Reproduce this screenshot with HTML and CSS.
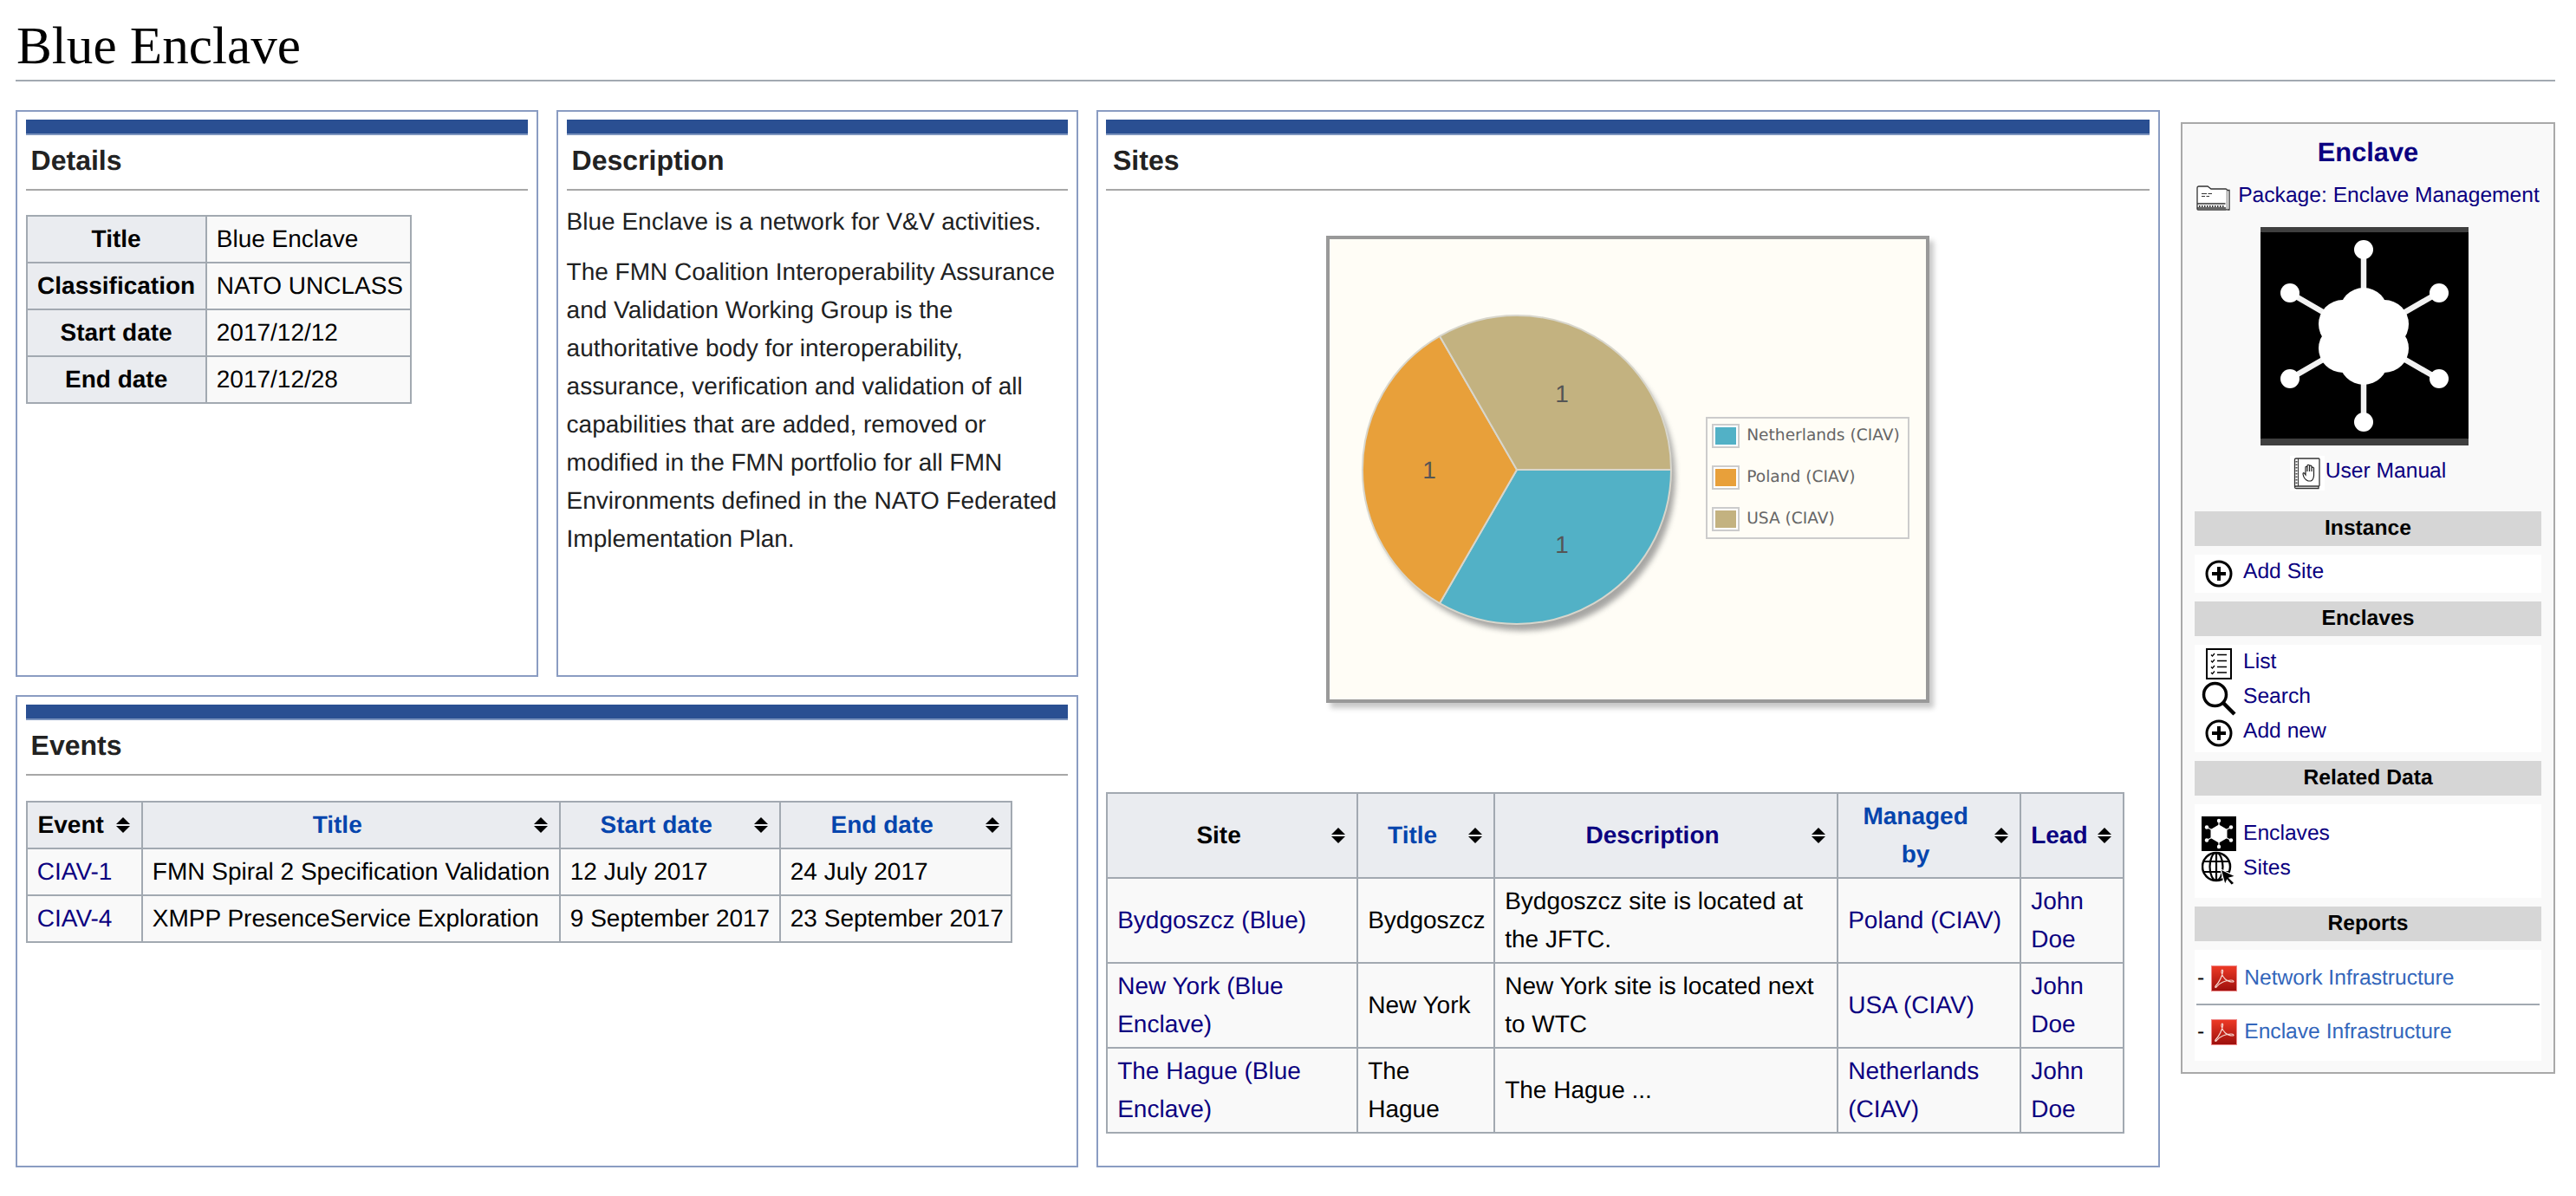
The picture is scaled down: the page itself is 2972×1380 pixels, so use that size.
FILE: index.html
```html
<!DOCTYPE html>
<html lang="en">
<head>
  <meta charset="UTF-8">
  <title>Blue Enclave</title>
  <link rel="stylesheet" href="styles.css">
</head>
<body>

  <svg class="svg-defs" aria-hidden="true">
    <defs>
      <linearGradient id="pdfRed" x1="0" y1="0" x2="0" y2="1">
        <stop offset="0" stop-color="#ee3a26"/>
        <stop offset="1" stop-color="#9c0f0c"/>
      </linearGradient>
    </defs>
    <symbol id="sort" viewBox="0 0 16 18">
      <path d="M8 0 16 8H0Z"/>
      <path d="M0 10H16L8 18Z"/>
    </symbol>
    <symbol id="plus" viewBox="0 0 40 40">
      <circle cx="20" cy="20" r="14" fill="#fff" stroke="#000" stroke-width="3"/>
      <path d="M12 20H28M20 12V28" stroke="#000" stroke-width="4"/>
    </symbol>
    <symbol id="pdf" viewBox="0 0 30 30">
      <rect x="0.5" y="0.5" width="29" height="29" fill="url(#pdfRed)" stroke="#e88"/>
      <path d="M5 24C9 20 13 12 13.6 7 13.9 4 11.6 4.600 12 8 13 14 18 19 25 19 27 19 26 17 23 17 17 17 10 20 6.500 24.500 5 26 4.300 25 5 24Z" fill="none" stroke="#f6d8d0" stroke-width="1.200"/>
    </symbol>
  </svg>

  <h1 class="page-title">Blue Enclave</h1>

  <div class="layout">
    <div class="main">
      <div class="left-col">
        <section class="panel panel-top">
          <div class="panel-bar"></div>
          <h2>Details</h2>
          <table class="wikitable details-table">
            <colgroup><col class="dt-1"><col></colgroup>
            <tr><th>Title</th><td>Blue Enclave</td></tr>
            <tr><th>Classification</th><td>NATO UNCLASS</td></tr>
            <tr><th>Start date</th><td>2017/12/12</td></tr>
            <tr><th>End date</th><td>2017/12/28</td></tr>
          </table>
        </section>

        <section class="panel panel-top">
          <div class="panel-bar"></div>
          <h2>Description</h2>
          <p class="desc-first">Blue Enclave is a network for V&amp;V activities.</p>
          <p>The FMN Coalition Interoperability Assurance and Validation Working Group is the authoritative body for interoperability, assurance, verification and validation of all capabilities that are added, removed or modified in the FMN portfolio for all FMN Environments defined in the NATO Federated Implementation Plan.</p>
        </section>

        <section class="panel panel-events">
          <div class="panel-bar"></div>
          <h2>Events</h2>
          <table class="wikitable events-table">
            <colgroup><col class="ev-1"><col class="ev-2"><col class="ev-3"><col></colgroup>
            <tr>
              <th class="sortable">Event<svg class="sort-icon"><use href="#sort"/></svg></th>
              <th class="sortable"><a class="link-new" href="#">Title</a><svg class="sort-icon"><use href="#sort"/></svg></th>
              <th class="sortable"><a class="link-new" href="#">Start date</a><svg class="sort-icon"><use href="#sort"/></svg></th>
              <th class="sortable"><a class="link-new" href="#">End date</a><svg class="sort-icon"><use href="#sort"/></svg></th>
            </tr>
            <tr><td><a href="#">CIAV-1</a></td><td>FMN Spiral 2 Specification Validation</td><td>12 July 2017</td><td>24 July 2017</td></tr>
            <tr><td><a href="#">CIAV-4</a></td><td>XMPP PresenceService Exploration</td><td>9 September 2017</td><td>23 September 2017</td></tr>
          </table>
        </section>
      </div>

      <section class="panel panel-sites">
        <div class="panel-bar"></div>
        <h2>Sites</h2>

        <div class="chart">
          <svg class="pie" viewBox="0 0 430 530">
            <defs>
              <filter id="pieBlur" x="-20%" y="-20%" width="140%" height="140%">
                <feGaussianBlur stdDeviation="3"/>
              </filter>
            </defs>
            <circle cx="223" cy="274" r="177" fill="#777" opacity="0.65" filter="url(#pieBlur)"/>
            <path d="M217 265H395A178 178 0 0 1 128 419.200Z" fill="#52b1c6" stroke="#d8d6cc" stroke-width="2"/>
            <path d="M217 265 128 419.200A178 178 0 0 1 128 110.800Z" fill="#e8a03a" stroke="#d8d6cc" stroke-width="2"/>
            <path d="M217 265 128 110.800A178 178 0 0 1 395 265Z" fill="#c3b280" stroke="#d8d6cc" stroke-width="2"/>
            <text class="pie-label" x="269" y="187">1</text>
            <text class="pie-label" x="116" y="275">1</text>
            <text class="pie-label" x="269" y="361">1</text>
          </svg>
          <div class="legend">
            <div class="legend-row"><span class="swatch"><i class="sw-teal"></i></span>Netherlands (CIAV)</div>
            <div class="legend-row"><span class="swatch"><i class="sw-orange"></i></span>Poland (CIAV)</div>
            <div class="legend-row"><span class="swatch"><i class="sw-tan"></i></span>USA (CIAV)</div>
          </div>
        </div>

        <table class="wikitable sites-table">
          <colgroup><col class="st-1"><col class="st-2"><col class="st-3"><col class="st-4"><col></colgroup>
          <tr>
            <th class="sortable">Site<svg class="sort-icon"><use href="#sort"/></svg></th>
            <th class="sortable"><a class="link-new" href="#">Title</a><svg class="sort-icon"><use href="#sort"/></svg></th>
            <th class="sortable"><a href="#">Description</a><svg class="sort-icon"><use href="#sort"/></svg></th>
            <th class="sortable"><a class="link-new" href="#">Managed by</a><svg class="sort-icon"><use href="#sort"/></svg></th>
            <th class="sortable"><a href="#">Lead</a><svg class="sort-icon"><use href="#sort"/></svg></th>
          </tr>
          <tr>
            <td><a href="#">Bydgoszcz (Blue)</a></td>
            <td>Bydgoszcz</td>
            <td>Bydgoszcz site is located at the JFTC.</td>
            <td><a href="#">Poland (CIAV)</a></td>
            <td><a href="#">John Doe</a></td>
          </tr>
          <tr>
            <td><a href="#">New York (Blue Enclave)</a></td>
            <td>New York</td>
            <td>New York site is located next to WTC</td>
            <td><a href="#">USA (CIAV)</a></td>
            <td><a href="#">John Doe</a></td>
          </tr>
          <tr>
            <td><a href="#">The Hague (Blue Enclave)</a></td>
            <td>The Hague</td>
            <td>The Hague ...</td>
            <td><a href="#">Netherlands (CIAV)</a></td>
            <td><a href="#">John Doe</a></td>
          </tr>
        </table>
      </section>
    </div>

    <aside class="sidebar">
      <div class="side-title"><a href="#">Enclave</a></div>

      <div class="side-link side-package">
        <svg class="folder-icon" viewBox="0 0 39 29">
          <path d="M1 27V3Q1 1 3 1H13L17 4H34Q35.500 4 35.500 6V27Q35.500 28 34 28H2Q1 28 1 27Z" fill="#fff" stroke="#333" stroke-width="1.300"/>
          <path d="M35.500 5.500H38V28H35.500" fill="#fff" stroke="#333" stroke-width="1.300"/>
          <path d="M6 9.500H12M13.500 9.500H18M6 12.500H10M11.500 12.500H15" stroke="#333" stroke-width="1.200"/>
          <path d="M1 21H33.500M1 26H34" stroke="#333" stroke-width="1.300"/>
          <path d="M3 24H32" stroke="#333" stroke-width="2" stroke-dasharray="1.500 1.500"/>
        </svg>
        <a href="#">Package: Enclave Management</a>
      </div>

      <svg class="enclave-image" viewBox="0 0 240 252">
        <rect width="240" height="252" fill="#000"/>
        <rect width="240" height="6" fill="#3f3f3f"/>
        <rect y="244" width="240" height="8" fill="#3f3f3f"/>
        <g fill="#fff">
          <path d="M119 26V225M34 76 205 175M205 76 34 175" stroke="#f2f2f2" stroke-width="6.500"/>
          <circle cx="119" cy="26" r="11"/>
          <circle cx="119" cy="225" r="11"/>
          <circle cx="34" cy="76" r="11"/>
          <circle cx="206" cy="76" r="11"/>
          <circle cx="34" cy="175" r="11"/>
          <circle cx="206" cy="175" r="11"/>
          <circle cx="119" cy="126" r="42"/>
          <circle cx="119" cy="98" r="28"/>
          <circle cx="119" cy="154" r="28"/>
          <circle cx="95" cy="112" r="28"/>
          <circle cx="143" cy="112" r="28"/>
          <circle cx="95" cy="140" r="28"/>
          <circle cx="143" cy="140" r="28"/>
        </g>
      </svg>

      <div class="side-link side-manual">
        <svg class="book-icon" viewBox="0 0 40 40">
          <rect width="40" height="40" fill="#fff"/>
          <path d="M5.500 36V4Q5.500 3 7 3H33Q34 3 34 4V34Q34 35 33 35H7Q5.500 35 5.500 36 5.500 37.500 7 37.500H33V35" fill="#fff" stroke="#333" stroke-width="1.300"/>
          <path d="M9.500 3V35" stroke="#333" stroke-width="1"/>
          <path d="M7.500 6V32" stroke="#444" stroke-width="2" stroke-dasharray="1.500 2"/>
          <path d="M21 29Q16 27 15 21Q15 19 16.500 20L18 22V13Q18.500 11.500 20 13V18V11Q21 9.500 22.500 11V18V11.500Q24 10.500 25 12V18V13.500Q26.500 12.500 27.500 14V23Q27 28 24 29Z" fill="#fff" stroke="#222" stroke-width="1.200"/>
        </svg>
        <a href="#">User Manual</a>
      </div>

      <div class="side-head side-head-first">Instance</div>
      <div class="side-body">
        <div class="side-row">
          <svg class="row-icon"><use href="#plus"/></svg>
          <a href="#">Add Site</a>
        </div>
      </div>

      <div class="side-head">Enclaves</div>
      <div class="side-body">
        <div class="side-row">
          <svg class="row-icon" viewBox="0 0 40 40">
            <rect x="6" y="3" width="28" height="34" fill="#fff" stroke="#000" stroke-width="2"/>
            <path d="M11 9.500 12.500 11 15 8M11 16.500 12.500 18 15 15M11 23.500 12.500 25 15 22M11 30 12.500 31.500 15 28.500" fill="none" stroke="#000" stroke-width="1.300"/>
            <path d="M18 9.500H29M18 16.500H29M18 23.500H29M18 30H29" stroke="#000" stroke-width="1.300"/>
          </svg>
          <a href="#">List</a>
        </div>
        <div class="side-row">
          <svg class="row-icon" viewBox="0 0 40 40">
            <circle cx="15.500" cy="15.500" r="13" fill="#fff" stroke="#000" stroke-width="3.500"/>
            <path d="M25 25 38 38" stroke="#000" stroke-width="4.500"/>
          </svg>
          <a href="#">Search</a>
        </div>
        <div class="side-row">
          <svg class="row-icon"><use href="#plus"/></svg>
          <a href="#">Add new</a>
        </div>
      </div>

      <div class="side-head">Related Data</div>
      <div class="side-body side-related">
        <div class="side-row">
          <svg class="row-icon" viewBox="0 0 40 40">
            <rect width="40" height="40" fill="#000"/>
            <g fill="#fff">
              <path d="M20 5V35M6 12.500 34 27.500M34 12.500 6 27.500" stroke="#eee" stroke-width="1.300"/>
              <circle cx="20" cy="5" r="2.200"/>
              <circle cx="20" cy="35" r="2.200"/>
              <circle cx="6" cy="12.500" r="2.200"/>
              <circle cx="34" cy="12.500" r="2.200"/>
              <circle cx="6" cy="27.500" r="2.200"/>
              <circle cx="34" cy="27.500" r="2.200"/>
              <path d="M20 10.500 28.500 15.500V24.500L20 29.500 11.500 24.500V15.500Z" stroke="#fff" stroke-width="2" stroke-linejoin="round"/>
            </g>
          </svg>
          <a href="#">Enclaves</a>
        </div>
        <div class="side-row">
          <svg class="row-icon" viewBox="0 0 40 40">
            <circle cx="17" cy="18" r="16" fill="#fff" stroke="#000" stroke-width="2.500"/>
            <ellipse cx="17" cy="18" rx="7.500" ry="16" fill="none" stroke="#000" stroke-width="2.200"/>
            <path d="M17 2V34M2 12H32M2 24H32" stroke="#000" stroke-width="2.200"/>
            <path d="M22 21 39 29 32 31 38 37 34.500 39.500 29.500 33.500 27 39Z" fill="#000" stroke="#fff" stroke-width="1.300"/>
          </svg>
          <a href="#">Sites</a>
        </div>
      </div>

      <div class="side-head">Reports</div>
      <div class="side-body side-reports">
        <div class="report-row">
          <span>-</span>
          <svg class="pdf-icon"><use href="#pdf"/></svg>
          <a href="#">Network Infrastructure</a>
        </div>
        <hr class="report-sep">
        <div class="report-row">
          <span>-</span>
          <svg class="pdf-icon"><use href="#pdf"/></svg>
          <a href="#">Enclave Infrastructure</a>
        </div>
      </div>
    </aside>
  </div>

</body>
</html>
```

FILE: styles.css
```css
* {
  box-sizing: border-box;
}

body {
  margin: 0;
  padding: 0 24px 0 18px;
  font-family: "Liberation Sans", Arial, sans-serif;
  font-size: 28px;
  line-height: 44px;
  color: #202122;
  background-color: #fff;
  text-rendering: geometricPrecision;
}

a {
  color: #0b0080;
  text-decoration: none;
}

.svg-defs {
  position: absolute;
  width: 0;
  height: 0;
}

.page-title {
  margin: 0 0 33px;
  padding: 15px 0 0 1px;
  font-family: "Liberation Serif", "Times New Roman", serif;
  font-size: 61.2px;
  font-weight: normal;
  line-height: 77px;
  color: #000;
  border-bottom: 2px solid #a2a9b1;
}

.layout {
  display: flex;
  gap: 24px;
  align-items: flex-start;
}

.main {
  display: grid;
  grid-template-columns: 1226px 1227px;
  gap: 21px;
}

.left-col {
  display: grid;
  grid-template-columns: 603px 602px;
  grid-template-rows: 654px 545px;
  gap: 21px;
}

.panel {
  padding: 9px 9.6px;
  border: 2px solid #8a9cc2;
}

.panel-events {
  grid-column: 1 / 3;
}

.panel-sites {
  padding-left: 9px;
}

.panel-bar {
  height: 18px;
  background-color: #2a4f92;
  border-bottom: 2px solid #7c94bd;
}

.panel h2 {
  margin: 0;
  height: 64px;
  padding-left: 6px;
  font-size: 32px;
  font-weight: bold;
  line-height: 58px;
  color: #222;
  border-bottom: 2px solid #a7a7a7;
}

.panel-sites h2 {
  padding-left: 8px;
}

.panel p {
  margin: 14px 0 0;
}

.panel .desc-first {
  margin-top: 14px;
}

/* tables */
.wikitable {
  border-collapse: collapse;
  table-layout: fixed;
  color: #000;
  background-color: #f9f9f9;
}

.wikitable th,
.wikitable td {
  padding: 4px 11.2px;
  border: 2px solid #a2a9b1;
  vertical-align: middle;
}

.wikitable th {
  text-align: center;
  background-color: #eaecf0;
}

.wikitable th.sortable {
  position: relative;
  padding-right: 42px;
}

.sort-icon {
  position: absolute;
  top: 50%;
  right: 13px;
  width: 16px;
  height: 18px;
  margin-top: -9px;
  fill: #000;
}

.link-new {
  color: #0645ad;
}

.details-table {
  width: 445px;
  margin-top: 28px;
}

.details-table td,
.events-table td {
  white-space: nowrap;
}

.dt-1 {
  width: 207px;
}

.events-table {
  width: 1138px;
  margin-top: 29px;
}

.ev-1 {
  width: 133px;
}

.ev-2 {
  width: 482px;
}

.ev-3 {
  width: 254px;
}

.sites-table {
  width: 1175px;
}

.st-1 {
  width: 289px;
}

.st-2 {
  width: 158px;
}

.st-3 {
  width: 396px;
}

.st-4 {
  width: 211px;
}

/* pie chart */
.chart {
  display: flex;
  align-items: center;
  width: 696px;
  height: 539px;
  margin: 52px auto 103px;
  background-color: #fffdf6;
  border: 4px solid #999;
  box-shadow: 5px 6px 6px rgba(0, 0, 0, 0.22);
}

.pie {
  flex: none;
  width: 430px;
  height: 530px;
  margin-left: -1px;
}

.pie-label {
  font-size: 28px;
  fill: #555;
  text-anchor: middle;
}

.legend {
  width: 235px;
  height: 141px;
  margin: 19px 0 0 5px;
  padding: 6px 0 0 5px;
  font-family: "DejaVu Sans", sans-serif;
  font-size: 18.6px;
  line-height: 28px;
  color: #666;
  border: 2px solid #ccc;
}

.legend-row {
  display: flex;
  gap: 8px;
  height: 28px;
  margin-bottom: 20px;
  white-space: nowrap;
}

.swatch {
  flex: none;
  width: 32px;
  height: 28px;
  padding: 2px;
  background-color: #fff;
  border: 2px solid #ccc;
}

.swatch i {
  display: block;
  height: 100%;
}

.sw-teal {
  background-color: #52b1c6;
}

.sw-orange {
  background-color: #e8a03a;
}

.sw-tan {
  background-color: #c3b280;
}

/* sidebar */
.sidebar {
  flex: none;
  width: 432px;
  height: 1098px;
  margin-top: 14px;
  padding: 13px 14px 13px;
  font-size: 24.64px;
  line-height: 36px;
  color: #000;
  background-color: #f9f9f9;
  border: 2px solid #a9a9a9;
}

.side-title {
  font-size: 30.8px;
  font-weight: bold;
  line-height: 40px;
  text-align: center;
}

.side-link {
  display: flex;
  align-items: center;
  justify-content: center;
}

.side-package {
  gap: 9px;
  height: 36px;
  margin-top: 14px;
}

.side-package a {
  margin-top: -4px;
}

.folder-icon {
  flex: none;
  width: 39px;
  height: 29px;
}

.enclave-image {
  display: block;
  width: 240px;
  height: 252px;
  margin: 16px 0 0 76px;
}

.side-manual {
  gap: 1px;
  height: 40px;
  margin-top: 12px;
}

.side-manual a {
  margin-top: -4px;
}

.book-icon {
  flex: none;
  width: 40px;
  height: 40px;
}

.side-head {
  height: 40px;
  margin-top: 10px;
  font-weight: bold;
  line-height: 39px;
  text-align: center;
  background-color: #d6d6d6;
}

.side-head-first {
  margin-top: 24px;
}

.side-body {
  margin-top: 10px;
  padding: 2px 0;
  background-color: #fff;
}

.side-row {
  display: flex;
  align-items: center;
  gap: 8px;
  height: 40px;
  padding-left: 8px;
}

.side-row a {
  margin-top: -4px;
}

.row-icon {
  flex: none;
  width: 40px;
  height: 40px;
}

.side-related {
  padding: 14px 0;
}

.side-related a {
  margin-top: 0;
}

.side-reports {
  padding: 18px 2px;
}

.report-row {
  display: flex;
  align-items: center;
  gap: 8px;
  height: 30px;
  padding-left: 1px;
}

.report-row a {
  margin-top: -1px;
  color: #3366bb;
}

.pdf-icon {
  flex: none;
  width: 30px;
  height: 30px;
}

.report-sep {
  height: 2px;
  margin: 14px 0 16px;
  background-color: #a2a9b1;
  border: 0;
}
```
